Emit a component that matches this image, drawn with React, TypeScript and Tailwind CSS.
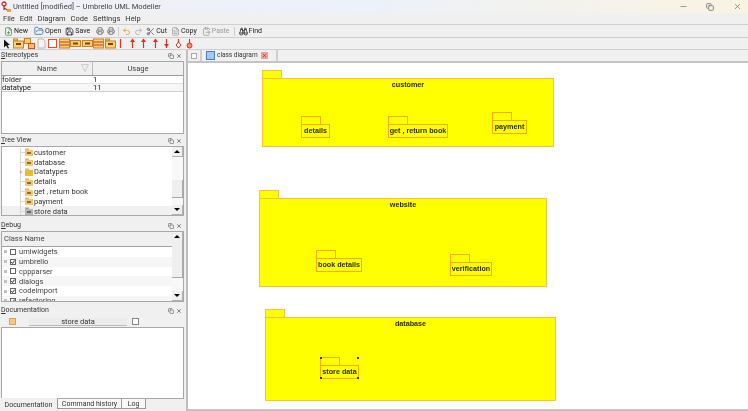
import { X, Minus, Copy, Printer, Binoculars, Undo2, Redo2, Scissors, FileText, ClipboardPaste, Save, FolderOpen, FilePlus, Plus } from 'lucide-react'

const font = "font-['Roboto',sans-serif]"

// one small folder icon used in the tree and toolbar
const PkgIcon = ({ grey = false, plain = false }: { grey?: boolean; plain?: boolean }) => (
  <svg width="8" height="8" viewBox="0 0 8 8" className="shrink-0">
    <rect x="0" y="0.5" width="4" height="2" fill={grey ? '#a8a8a8' : '#e8b860'} />
    <rect x="0" y="2" width="8" height="6" fill={grey ? '#b4b4b4' : plain ? '#eeb830' : '#f0c878'} />
    {!plain && <rect x="2" y="4" width="4" height="2" fill={grey ? '#666' : '#a06820'} />}
  </svg>
)

const ToolBox = ({ kind }: { kind: number }) => (
  <svg width="11" height="11" viewBox="0 0 11 11" className="shrink-0">
    {kind === 0 && <rect x="1.5" y="1.5" width="8" height="8" fill="#fff" stroke="#e05030" />}
    {kind === 1 && (
      <>
        <rect x="0.5" y="1" width="10" height="9" fill="#ffd070" stroke="#d08020" />
        <line x1="1" y1="4" x2="10" y2="4" stroke="#d03010" />
        <line x1="1" y1="7" x2="10" y2="7" stroke="#d03010" />
      </>
    )}
    {kind === 2 && (
      <>
        <rect x="0.5" y="2.5" width="10" height="6" fill="#ffd070" stroke="#d08020" />
        <rect x="3" y="4.5" width="5" height="2" fill="#804010" />
      </>
    )}
    {kind === 3 && (
      <>
        <rect x="0.5" y="1" width="4" height="2" fill="#ffd070" stroke="#d08020" />
        <rect x="0.5" y="3" width="10" height="7" fill="#ffd070" stroke="#d08020" />
        <rect x="3" y="5" width="5" height="2" fill="#804010" />
      </>
    )}
    {kind === 4 && (
      <>
        <rect x="0.5" y="0.5" width="6" height="5" fill="#ffd070" stroke="#d08020" />
        <rect x="4.5" y="5.5" width="6" height="5" fill="#ffc070" stroke="#d05020" />
      </>
    )}
    {kind === 5 && <path d="M2 1h5l2 2v7H2z" fill="#f4f4f4" stroke="#b8b8b8" />}
  </svg>
)

// arrows on the second toolbar, mostly red uml association tools
const Arrow = ({ head }: { head: 'none' | 'up' | 'down' | 'diamond' | 'circle' }) => (
  <svg width="9" height="11" viewBox="0 0 9 11" className="shrink-0">
    <line x1="4.5" y1="1" x2="4.5" y2="10" stroke="#e03020" strokeWidth="1.2" />
    {head === 'up' && <path d="M2 4 L4.5 0.5 L7 4 Z" fill="#e03020" />}
    {head === 'down' && <path d="M2 6 L4.5 9.5 L7 6 Z" fill="#e03020" />}
    {head === 'diamond' && <path d="M4.5 4 L7 7 L4.5 10 L2 7 Z" fill="#fff" stroke="#e03020" />}
    {head === 'circle' && <circle cx="4.5" cy="7.5" r="2.5" fill="#f09060" stroke="#e03020" />}
  </svg>
)

const PanelHeader = ({ title }: { title: string }) => (
  <div className="h-[11px] shrink-0 flex items-center pl-[1px] pr-[4px] text-[7px] leading-none text-[#333]">
    <span className="flex-1">
      <span className="underline">{title[0]}</span>
      {title.slice(1)}
    </span>
    <Copy size={6} strokeWidth={2} className="text-[#444] mr-[2px]" />
    <X size={6} strokeWidth={2.5} className="text-[#444]" />
  </div>
)

const ScrollBar = ({ top, height }: { top: number; height: number }) => (
  <div className="relative w-[11px] shrink-0 self-stretch flex flex-col justify-between bg-[#f8f8f8]">
    <div className="h-[10px] bg-[#f0f0f0] border-b border-r border-[#b0b0b0] flex items-center justify-center">
      <div className="w-0 h-0 border-x-[3px] border-x-transparent border-b-[3px] border-b-black" />
    </div>
    <div
      className="absolute left-0 right-0 bg-[#efefef] border-r border-b border-[#a8a8a8]"
      style={{ top, height }}
    />
    <div className="h-[10px] bg-[#f0f0f0] border-b border-r border-[#b0b0b0] flex items-center justify-center">
      <div className="w-0 h-0 border-x-[3px] border-x-transparent border-t-[3px] border-t-black" />
    </div>
  </div>
)

type PkgProps = {
  x: number
  y: number
  w: number
  h: number
  name: string
  big?: boolean
  selected?: boolean
}

// uml package: tab plus body, placed on the diagram canvas
const Pkg = ({ x, y, w, h, name, big, selected }: PkgProps) => (
  <div className="absolute" style={{ left: x, top: y, width: w, height: h + 8 }}>
    <div className={`w-[20px] h-[9px] bg-[#ffff00] border ${big ? 'border-[#f8c040]' : 'border-[#f2ae00]'}`} />
    <div
      className={`relative -mt-[1px] bg-[#ffff00] border whitespace-nowrap ${big ? 'border-[#f8c040] pt-[1px]' : 'border-[#f2ae00] justify-center items-center flex'} text-center font-['Liberation_Sans',sans-serif] font-bold text-[7.2px] leading-[10px] text-[#2b2b10]`}
      style={{ height: h }}
    >
      {name}
    </div>
    {selected && (
      <>
        <div className="absolute left-0 top-0 w-[2px] h-[2px] bg-[#333]" />
        <div className="absolute right-0 top-0 w-[2px] h-[2px] bg-[#333]" />
        <div className="absolute left-0 bottom-0 w-[2px] h-[2px] bg-[#333]" />
        <div className="absolute right-0 bottom-0 w-[2px] h-[2px] bg-[#333]" />
      </>
    )}
  </div>
)

const treeRows = [
  { name: 'customer' },
  { name: 'database' },
  { name: 'Datatypes', folder: true },
  { name: 'details' },
  { name: 'get , return book' },
  { name: 'payment' },
  { name: 'store data', selected: true },
]

const debugRows = [
  { name: 'umlwidgets', on: false },
  { name: 'umbrello', on: true },
  { name: 'cppparser', on: false },
  { name: 'dialogs', on: true },
  { name: 'codeimport', on: true },
  { name: 'refactoring', on: true },
]

export default function App() {
  return (
    <div className={`${font} w-[748px] h-[411px] overflow-hidden flex flex-col bg-[#f0f0f0] text-[#333] blur-[0.3px]`}>
      {/* title and menu */}
      <div className="h-[25px] border-b border-[#cfcfcf] shrink-0">
        <div className="h-[13px] flex items-center pl-[1px] text-[7.5px] text-[#444] bg-gradient-to-r from-[#f0f0f6] via-[#edf1f8] to-[#f9f3e2]">
          <svg width="11" height="12" viewBox="0 0 11 12" className="mr-[1px]">
            <circle cx="3" cy="3" r="2" fill="none" stroke="#c03030" strokeWidth="1.3" />
            <path d="M3 5 L3 9 M3 7 L8 10" stroke="#c03030" strokeWidth="1.3" />
            <rect x="6" y="8" width="4" height="3" fill="#e8a040" />
          </svg>
          Untitled [modified] – Umbrello UML Modeller
          <div className="ml-auto flex items-center pr-[6px] text-[#555]">
            <Minus size={9} strokeWidth={1.5} />
            <Copy size={8} strokeWidth={2} className="ml-[18px]" />
            <X size={9} strokeWidth={1.5} className="ml-[19px]" />
          </div>
        </div>
        <div className="h-[11px] flex items-center gap-[5px] pl-[3px] text-[7.5px] text-[#333]">
          <span>File</span>
          <span>Edit</span>
          <span>Diagram</span>
          <span>Code</span>
          <span>Settings</span>
          <span>Help</span>
        </div>
      </div>

      {/* main toolbar */}
      <div className="h-[13px] shrink-0 border-b border-[#cfcfcf] flex items-center pl-[4px] text-[7px] whitespace-nowrap text-[#222]">
        <FilePlus size={9} className="text-[#2a9a40]" />
        <span className="ml-[1px]">New</span>
        <FolderOpen size={10} className="text-[#3a70b0] ml-[6px]" />
        <span className="ml-[1px]">Open</span>
        <Save size={9} className="text-[#223] ml-[4px]" />
        <span className="ml-[1px]">Save</span>
        <Printer size={8} className="text-[#555] ml-[6px]" />
        <Printer size={8} className="text-[#555] ml-[3px]" />
        <div className="w-[1px] h-[9px] bg-[#ccc] ml-[3px]" />
        <Undo2 size={9} className="text-[#d8a020] ml-[3px]" />
        <Redo2 size={9} className="text-[#aaa] ml-[3px]" />
        <Scissors size={9} className="text-[#555] ml-[3px]" />
        <span className="ml-[1px]">Cut</span>
        <FileText size={9} className="text-[#999] ml-[4px]" />
        <span className="ml-[1px]">Copy</span>
        <ClipboardPaste size={9} className="text-[#999] ml-[5px]" />
        <span className="ml-[1px] text-[#999]">Paste</span>
        <div className="w-[1px] h-[9px] bg-[#ccc] ml-[4px]" />
        <Binoculars size={9} className="text-[#222] ml-[4px]" />
        <span className="ml-[1px]">Find</span>
      </div>

      {/* diagram toolbar */}
      <div className="h-[12px] shrink-0 border-b border-[#cfcfcf] flex items-center gap-[0.5px] pl-[3px]">
        <svg width="8" height="10" viewBox="0 0 8 10" className="mr-[1px]">
          <path d="M1 0.5 L1 8.5 L3 6.5 L5 9.5 L6 9 L4.5 6 L7 6 Z" fill="#111" />
        </svg>
        <ToolBox kind={3} />
        <ToolBox kind={4} />
        <ToolBox kind={5} />
        <ToolBox kind={0} />
        <ToolBox kind={1} />
        <ToolBox kind={2} />
        <ToolBox kind={2} />
        <ToolBox kind={1} />
        <ToolBox kind={3} />
        <div className="flex items-center gap-[2.5px]">
          <Arrow head="none" />
          <Arrow head="up" />
          <Arrow head="up" />
          <Arrow head="up" />
          <Arrow head="down" />
          <Arrow head="diamond" />
          <Arrow head="circle" />
        </div>
      </div>

      <div className="flex-1 flex min-h-0">
        {/* left docks */}
        <div className="w-[186px] shrink-0 flex flex-col text-[7.5px]">
          <div className="h-[85px] shrink-0 flex flex-col">
            <PanelHeader title="Stereotypes" />
            <div className="flex-1 mx-[1px] mr-[2px] bg-white border border-[#a8a8a8] mb-[1px]">
              <div className="h-[14px] flex bg-[#f0f0f0] border-b border-[#9a9a9a] text-[#444]">
                <div className="w-[91px] relative text-center leading-[14px] border-r border-[#bbb]">
                  Name
                  <svg width="8" height="8" viewBox="0 0 8 8" className="absolute right-[3px] top-[2px]">
                    <path d="M0.5 0.5 H7.5 L4 7.5 Z" fill="none" stroke="#ccc" />
                  </svg>
                </div>
                <div className="flex-1 text-center leading-[14px]">Usage</div>
              </div>
              <div className="h-[8px] flex items-center leading-none text-[#222] border-b border-[#e0e0e0]">
                <span className="w-[91px]">folder</span>
                <span>1</span>
              </div>
              <div className="h-[8px] flex items-center leading-none text-[#222] border-b border-[#d0d0d0] bg-[#f6f6f6]">
                <span className="w-[91px]">datatype</span>
                <span>11</span>
              </div>
            </div>
          </div>

          <div className="h-[85px] shrink-0 flex flex-col">
            <PanelHeader title="Tree View" />
            <div className="h-[70px] ml-[1px] mr-[2px] bg-white border border-[#a8a8a8] flex overflow-hidden">
              <div className="flex-1 min-w-0 pt-[0.5px]">
                {treeRows.map((r) => (
                  <div
                    key={r.name}
                    className={`h-[9.8px] flex items-center pl-[18px] text-[#333] ${r.selected ? 'bg-[#f0f0f0]' : ''}`}
                  >
                    <div className="w-[5px] h-full border-l border-[#d8d8d8] flex items-center">
                      {r.folder ? (
                        <Plus size={4} strokeWidth={3} className="text-[#888] -ml-[2px]" />
                      ) : (
                        <div className="w-full h-[1px] bg-[#d8d8d8]" />
                      )}
                    </div>
                    <PkgIcon grey={r.selected} plain={r.folder} />
                    <span className="ml-[1px]">{r.name}</span>
                  </div>
                ))}
              </div>
              <ScrollBar top={33} height={18} />
            </div>
          </div>

          <div className="h-[85px] shrink-0 flex flex-col">
            <PanelHeader title="Debug" />
            <div className="h-[71px] ml-[1px] mr-[2px] bg-white border border-[#a8a8a8] flex overflow-hidden">
              <div className="flex-1 min-w-0">
                <div className="h-[15px] bg-[#f0f0f0] border-b border-[#a0a0a0] leading-[14px] pl-[2px] text-[#444]">Class Name</div>
                {debugRows.map((r, i) => (
                  <div
                    key={r.name}
                    className={`h-[9.8px] flex items-center pl-[2px] text-[#444] ${i % 2 === 1 ? 'bg-[#f6f6f6]' : ''}`}
                  >
                    <span className="w-[3px] h-[3px] bg-[#c0c0c0] mr-[3px]" />
                    <span className="w-[6px] h-[6px] border border-[#666] mr-[3px] flex items-center justify-center">
                      {r.on && (
                        <svg width="4" height="4" viewBox="0 0 4 4">
                          <path d="M0.3 2 L1.5 3.5 L3.7 0.5" fill="none" stroke="#333" />
                        </svg>
                      )}
                    </span>
                    {r.name}
                  </div>
                ))}
              </div>
              <ScrollBar top={9} height={37} />
            </div>
          </div>

          <div className="flex-1 flex flex-col min-h-0">
            <PanelHeader title="Documentation" />
            <div className="h-[11px] shrink-0 flex items-center">
              <div className="w-[7px] h-[7px] ml-[9px] bg-[#f6c880] border border-[#e8a040]" />
              <div className="ml-[13px] w-[98px] h-[8px] bg-[#ececec] border-b border-[#bbb] text-center leading-[8px] text-[#333]">store data</div>
              <div className="ml-[5px] w-[7px] h-[7px] border border-[#888] bg-white" />
            </div>
            <div className="flex-1 ml-[1px] mr-[2px] bg-white border border-[#a8a8a8] border-b-0" />
            <div className="h-[13px] shrink-0 flex border-t border-[#a8a8a8] mr-[2px] text-[7px] leading-[10px] text-[#333] text-center">
              <div className="w-[57px] h-[13px] -mt-[1px] bg-[#f0f0f0] pt-[2px]">Documentation</div>
              <div className="w-[65px] h-[10px] bg-[#f8f8f8] border-x border-b border-[#999]">Command history</div>
              <div className="w-[24px] h-[10px] bg-[#f8f8f8] border-r border-b border-[#999]">Log</div>
            </div>
          </div>
        </div>

        {/* diagram area */}
        <div className="flex-1 min-w-0 flex flex-col border-l-2 border-[#c0c0c0]">
          <div className="h-[13px] shrink-0 flex items-center border-b-2 border-[#c4c4c4] text-[6.5px]">
            <div className="w-[14px] h-full flex items-center justify-center border-r-2 border-[#cfcfcf]">
              <div className="w-[6px] h-[6px] bg-white border border-[#aaa]" />
            </div>
            <div className="flex items-center gap-[2px] ml-[4px] text-[#333]">
              <div className="w-[9px] h-[9px] bg-[#a8c8f0] border border-[#4880c0]" />
              class diagram
              <div className="ml-[1px] w-[7px] h-[7px] bg-[#f0a090] flex items-center justify-center">
                <X size={5} strokeWidth={3} className="text-[#b02020]" />
              </div>
            </div>
            <div className="ml-[8px] w-[2px] h-full bg-[#cfcfcf]" />
          </div>
          <div className="relative flex-1 bg-white border-b-2 border-[#c4c4c4]">
            <Pkg x={74} y={7} w={292} h={69} name="customer" big />
            <Pkg x={113} y={53} w={29} h={14} name="details" />
            <Pkg x={200} y={53} w={60} h={14} name="get , return book" />
            <Pkg x={304} y={49} w={35} h={14} name="payment" />
            <Pkg x={71} y={127} w={288} h={89} name="website" big />
            <Pkg x={128} y={187} w={46} h={14} name="book details" />
            <Pkg x={262} y={191} w={42} h={14} name="verification" />
            <Pkg x={77} y={246} w={291} h={84} name="database" big />
            <Pkg x={132} y={294} w={39} h={14} name="store data" selected />
          </div>
        </div>
      </div>
    </div>
  )
}
